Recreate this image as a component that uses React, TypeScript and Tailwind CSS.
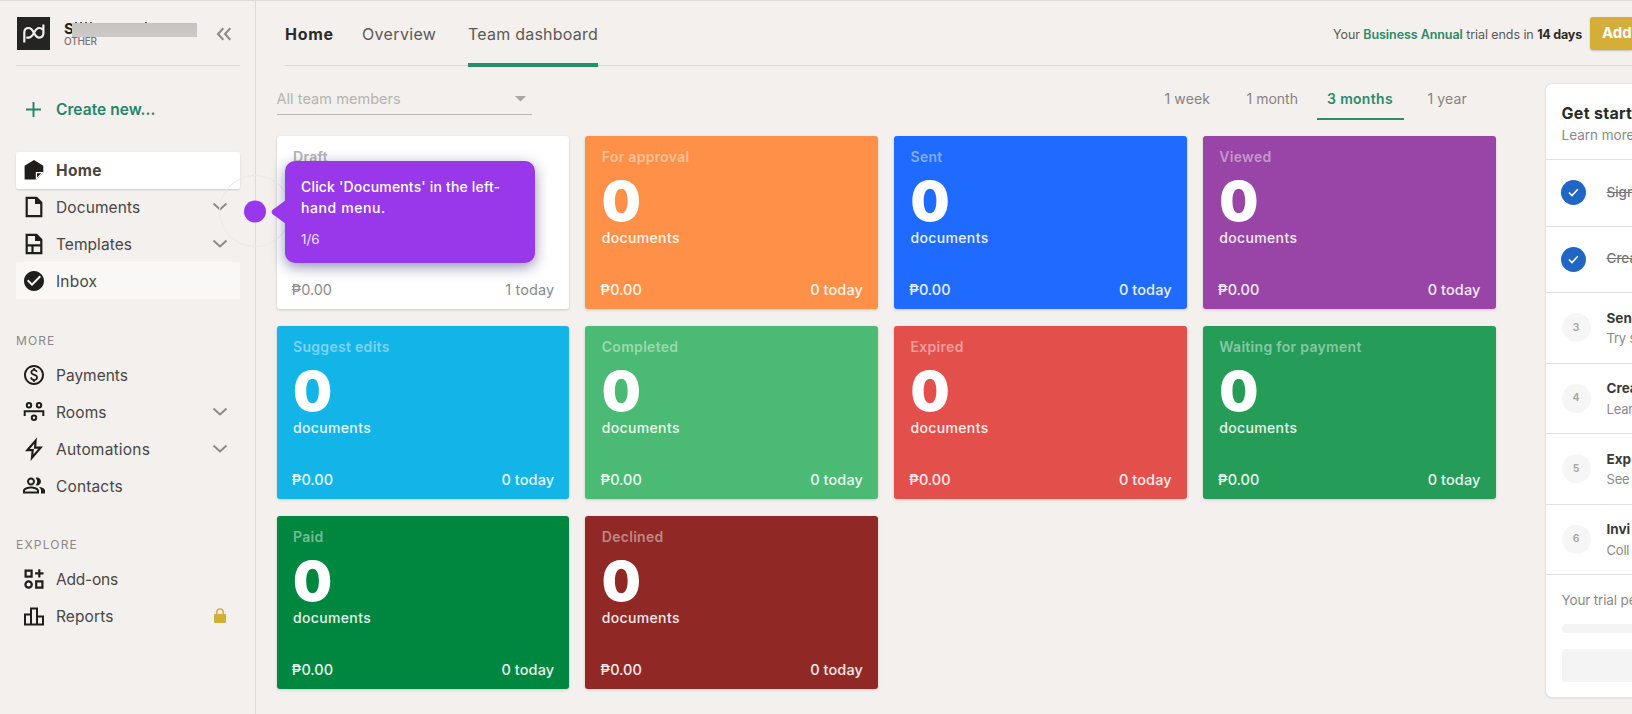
import type { ReactNode } from "react";
import { MdCheckCircle, MdOutlinePaid, MdOutlinePeopleAlt } from "react-icons/md";

const stroke = { fill: "none", stroke: "currentColor", strokeWidth: 2 };

const HomeIcon = () => (
  <svg width="24" height="24" viewBox="0 0 24 24">
    <path d="M12 2 21.300 7.800v6.700L14.500 21.600H2.600V7.800z" fill="currentColor" />
    <path d="M14.400 20.800v-6.200h6.200z" fill="currentColor" stroke="#fff" strokeWidth="1.200" />
  </svg>
);
const DocIcon = () => (
  <svg width="24" height="24" viewBox="0 0 24 24">
    <path d="M4.700 2.900h9.800l4.800 4.800v13.500H4.700z" {...stroke} strokeWidth="2.200" />
    <path d="M13 2.400v6.500h6.800z" fill="currentColor" />
  </svg>
);
const TemplateIcon = () => (
  <svg width="24" height="24" viewBox="0 0 24 24">
    <path d="M4.700 2.900h9.800l4.800 4.800v13.500H4.700zM4.700 13.300h14.600M10.500 13.300v8" {...stroke} strokeWidth="2.200" />
    <path d="M13 2.400v6.500h6.800z" fill="currentColor" />
  </svg>
);
const RoomsIcon = () => (
  <svg width="24" height="24" viewBox="0 0 24 24">
    <g {...stroke} strokeWidth="2">
      <circle cx="7" cy="5.200" r="2.200" />
      <circle cx="17" cy="5.200" r="2.200" />
      <circle cx="12" cy="17.800" r="2.200" />
      <path d="M2.700 16v-4.800h18.600V16" />
    </g>
  </svg>
);
const BoltIcon = () => (
  <svg width="24" height="24" viewBox="0 0 24 24">
    <path d="M13.600 3.600 5.300 13.200h5.400l-.7 7.400 8.600-10h-5.500z" {...stroke} strokeWidth="2.200" />
  </svg>
);
const AddonsIcon = () => (
  <svg width="24" height="24" viewBox="0 0 24 24">
    <g {...stroke} strokeWidth="2.200">
      <path d="M3.600 3.600h6v6h-6zM14.200 14.400h6.200v6.200h-6.200zM17.300 2.200v8.400M13.100 6.400h8.400" />
      <circle cx="6.600" cy="17.500" r="3.200" />
    </g>
  </svg>
);
const ReportsIcon = () => (
  <svg width="25" height="25" viewBox="0 0 24 24">
    <path d="M16 11V3H8v6H2v12h20V11zm-6-6h4v14h-4zm-6 6h4v8H4zm16 8h-4v-6h4z" fill="currentColor" />
  </svg>
);
const LockIcon = () => (
  <svg width="14" height="16" viewBox="0 0 14 16" className="mr-px text-[#d4af37]">
    <path d="M3.800 7V4.300a3.200 3.200 0 0 1 6.400 0V7" fill="none" stroke="currentColor" strokeWidth="1.500" />
    <rect x="1" y="6" width="12" height="9" rx="1.200" fill="currentColor" />
  </svg>
);
const Chevron = () => (
  <svg width="16" height="10" viewBox="0 0 16 10" className="text-[#8b8987]">
    <path d="m1.500 1.500 6.500 6 6.500-6" fill="none" stroke="currentColor" strokeWidth="2" />
  </svg>
);

type NavItem = {
  label: string;
  icon: ReactNode;
  tracking: string;
  expand?: boolean;
  locked?: boolean;
  look?: string;
};

const main: NavItem[] = [
  {
    label: "Home",
    icon: <HomeIcon />,
    tracking: "tracking-[0.3px]",
    look: "bg-white font-bold text-[#222] shadow-[0_1px_2px_rgba(0,0,0,0.15)]",
  },
  { label: "Documents", icon: <DocIcon />, tracking: "tracking-[0.1px]", expand: true },
  { label: "Templates", icon: <TemplateIcon />, tracking: "tracking-[0.05px]", expand: true },
  { label: "Inbox", icon: <MdCheckCircle size={24} />, tracking: "tracking-[0.2px]", look: "bg-[#f9f8f6]" },
];
const more: NavItem[] = [
  { label: "Payments", icon: <MdOutlinePaid size={24} />, tracking: "tracking-[0px]" },
  { label: "Rooms", icon: <RoomsIcon />, tracking: "tracking-[0.1px]", expand: true },
  { label: "Automations", icon: <BoltIcon />, tracking: "tracking-[0.2px]", expand: true },
  { label: "Contacts", icon: <MdOutlinePeopleAlt size={25} />, tracking: "tracking-[0.15px]" },
];
const explore: NavItem[] = [
  { label: "Add-ons", icon: <AddonsIcon />, tracking: "tracking-[-0.2px]" },
  { label: "Reports", icon: <ReportsIcon />, tracking: "tracking-[0.1px]", locked: true },
];

function NavList({ items }: { items: NavItem[] }) {
  return (
    <ul>
      {items.map((it) => (
        <li
          key={it.label}
          className={`flex h-[36.75px] items-center rounded-[2px] pl-1.5 pr-3 text-[15.5px] text-[#484644] ${it.look ?? ""}`}
        >
          <span className="flex w-6 justify-center text-[#1f1e1c]">{it.icon}</span>
          <span className={`ml-[10px] flex-1 pt-px ${it.tracking}`}>{it.label}</span>
          {it.expand && <Chevron />}
          {it.locked && <LockIcon />}
        </li>
      ))}
    </ul>
  );
}

function Sidebar() {
  return (
    <aside className="flex w-[256px] shrink-0 flex-col border-r border-[#dedbd8] pl-4 pr-[15px]">
      <div className="flex h-[65px] shrink-0 items-start border-b border-[#dad7d4] pl-px pt-4">
        <svg width="33" height="33" viewBox="0 0 33 33" className="shrink-0">
          <rect width="33" height="33" fill="#242423" />
          <path
            d="M7.300 25.500V15.500c0-2.800 1.700-4.500 4.300-4.500 5.400 0 5.400 9.600 10.500 9.600 2.700 0 4.300-1.700 4.300-4.500V7.500M9.300 20.600h2.300c5.400 0 5.400-9.600 10.500-9.600 1.600 0 2.900.6 3.600 1.700"
            fill="none"
            stroke="#f3f0ed"
            strokeWidth="2.200"
          />
        </svg>
        <div className="relative ml-3.5 h-9 w-[134px] pt-[3px]">
          <div className="text-[15px] font-bold leading-[17px] text-[#222]">S</div>
          <div className="mt-[-2px] text-[10px] font-medium leading-[13px] tracking-[-0.2px] text-[#777573]">OTHER</div>
          <div className="absolute left-2 top-[6px] h-[14px] w-[125px] bg-gradient-to-b from-[#c6c4c2] to-[#cdcbc9]" />
          <div className="absolute left-[11px] top-[5px] flex gap-[3px]">
            <i className="h-px w-[2px] bg-[#555]" />
            <i className="h-px w-[2px] bg-[#555]" />
            <i className="h-px w-[2px] bg-[#555]" />
            <i className="h-px w-[2px] bg-[#555]" />
            <i className="ml-[50px] h-px w-[2px] bg-[#555]" />
          </div>
        </div>
        <svg width="16" height="14" viewBox="0 0 16 14" className="ml-[18px] mt-2.5">
          <path d="M7.300 1.300 2 7l5.300 5.700M14.300 1.300 9 7l5.300 5.700" fill="none" stroke="#8b8987" strokeWidth="2" />
        </svg>
      </div>
      <div className="mt-[24px] flex h-[38px] shrink-0 items-center pl-2.5 text-[#248567]">
        <svg width="15" height="15" viewBox="0 0 15 15">
          <path d="M7.500 0v15M0 7.500h15" stroke="currentColor" strokeWidth="1.900" />
        </svg>
        <span className="ml-[15px] pt-px text-[15.5px] font-semibold tracking-[0.05px]">Create new...</span>
      </div>
      <div className="mt-[24px]">
        <NavList items={main} />
      </div>
      <h3 className="mt-[33px] text-[12px] leading-[18px] tracking-[1.1px] text-[#8b8987]">MORE</h3>
      <div className="mt-[7px]">
        <NavList items={more} />
      </div>
      <h3 className="mt-[32px] text-[12px] leading-[18px] tracking-[1.2px] text-[#8b8987]">EXPLORE</h3>
      <div className="mt-[7px]">
        <NavList items={explore} />
      </div>
    </aside>
  );
}

function Header() {
  return (
    <header className="ml-[29px] flex h-[65px] shrink-0 items-start border-b border-[#dad7d4]">
      <span className="w-[77px] pt-[21px] text-[16px] font-bold leading-6 tracking-[0.7px] text-[#2b2a29]">Home</span>
      <span className="w-[106px] pt-[21px] text-[16px] leading-6 tracking-[0.35px] text-[#5b5957]">Overview</span>
      <span className="h-[66px] w-[130px] whitespace-nowrap border-b-4 border-[#248f68] pt-[21px] text-[16px] leading-6 tracking-[0.22px] text-[#5b5957]">
        Team dashboard
      </span>
      <div className="ml-auto flex shrink-0 whitespace-nowrap pt-4">
        <p className="pt-[7px] text-[12.5px] leading-[21px] tracking-[-0.07px] text-[#5b5957]">
          Your <b className="font-semibold text-[#2c8a69]">Business Annual</b> trial ends in{" "}
          <b className="font-bold tracking-[-0.2px] text-[#2b2a29]">14 days</b>
        </p>
        <button className="ml-2 h-[33px] w-[42px] rounded-l-[3px] bg-[#d4ae37] pl-3 text-left text-[15px] font-bold text-white shadow-[0_1px_2px_rgba(0,0,0,0.2)]">
          Add
        </button>
      </div>
    </header>
  );
}

const cards = [
  { title: "Draft", bg: "bg-white", today: 1 },
  { title: "For approval", bg: "bg-[#ff9047]", today: 0 },
  { title: "Sent", bg: "bg-[#206bff]", today: 0 },
  { title: "Viewed", bg: "bg-[#9944a7]", today: 0 },
  { title: "Suggest edits", bg: "bg-[#13b4e8]", today: 0 },
  { title: "Completed", bg: "bg-[#4aba74]", today: 0 },
  { title: "Expired", bg: "bg-[#e34f4b]", today: 0 },
  { title: "Waiting for payment", bg: "bg-[#259d58]", today: 0 },
  { title: "Paid", bg: "bg-[#00873f]", today: 0 },
  { title: "Declined", bg: "bg-[#902926]", today: 0 },
];

function Card({ title, bg, today }: (typeof cards)[number]) {
  const draft = title === "Draft";
  return (
    <div
      className={`flex h-[173px] flex-col rounded-[3px] pl-[16.5px] pr-4 shadow-[0_1px_3px_rgba(0,0,0,0.16)] ${bg} ${draft ? "text-[#8b8987]" : "text-white"}`}
    >
      <div className={`mt-[11px] text-[14px] font-semibold leading-5 tracking-[0.3px] ${draft ? "text-[#b5b3b1]" : "text-white/45"}`}>
        {title}
      </div>
      {!draft && (
        <>
          <div className="mt-[6px] text-[55px] font-black leading-[56px]">0</div>
          <div className="text-[14px] font-medium leading-[18px] tracking-[0.35px] text-white/90">documents</div>
        </>
      )}
      <div
        className={`-ml-[1.5px] -mr-px mb-[9px] mt-auto flex justify-between text-[14.5px] leading-5 ${draft ? "" : "font-medium text-white/90"}`}
      >
        <span>₱0.00</span>
        <span className="tracking-[0.1px]">{today} today</span>
      </div>
    </div>
  );
}

function Tour() {
  return (
    <div className="absolute left-[219px] top-[174px] flex size-[72px] items-center justify-center rounded-full border border-[#ece9e6]">
      <div className="size-[22px] translate-y-[0.5px] rounded-full bg-[#9838ea]" />
      <div className="absolute left-[65px] top-[-15px] h-[102px] w-[250px] rounded-[10px] bg-[#9838ea] px-4 pt-[15px] text-white shadow-[0_4px_14px_rgba(40,40,110,0.5)]">
        <svg width="15" height="24" viewBox="0 0 15 24" className="absolute left-[-14px] top-[39px]">
          <path d="M15 0v24L2 14.500Q-.8 12 2 9.500z" fill="#9838ea" />
        </svg>
        <p className="whitespace-nowrap text-[14px] font-medium leading-[21px] tracking-[0.17px]">
          Click 'Documents' in the left-
          <br />
          <span className="tracking-[0.6px]">hand menu.</span>
        </p>
        <p className="mt-[11px] text-[13.5px] leading-[21px] text-white/85">1/6</p>
      </div>
    </div>
  );
}

const steps = [
  { n: 3, title: "Sen", sub: "Try s" },
  { n: 4, title: "Crea", sub: "Lear" },
  { n: 5, title: "Exp", sub: "See" },
  { n: 6, title: "Invi", sub: "Coll" },
];

function Checklist() {
  return (
    <section className="ml-[49px] mt-[17px] h-[615px] w-[88px] shrink-0 overflow-hidden whitespace-nowrap rounded-l-[7px] border border-r-0 border-[#e6e3e0] bg-white shadow-[0_1px_2px_rgba(0,0,0,0.06)]">
      <div className="h-[76px] border-b border-[#dfdfdf] pl-4 pt-[18px]">
        <h2 className="text-[16px] font-bold leading-[22px] tracking-[0.3px] text-[#2b2a29]">Get start</h2>
        <p className="text-[13.5px] leading-[23px] text-[#8b8987]">Learn more</p>
      </div>
      {["Sign", "Crea"].map((t) => (
        <div key={t} className="flex h-[66.5px] items-center border-b border-[#dfdfdf] pl-[15px]">
          <span className="flex size-[25px] shrink-0 items-center justify-center rounded-full bg-[#1f66c7]">
            <svg width="11" height="9" viewBox="0 0 11 9">
              <path d="m1 4.500 3 3L9.800 1.200" fill="none" stroke="#fff" strokeWidth="1.600" />
            </svg>
          </span>
          <s className="ml-[21px] pb-0.5 text-[13.5px] font-medium text-[#777573]">{t}</s>
        </div>
      ))}
      {steps.map((s) => (
        <div key={s.n} className="flex h-[70.5px] items-center border-b border-[#dfdfdf] pl-4">
          <span className="flex size-[29px] shrink-0 items-center justify-center rounded-full bg-[#f6f6f6] text-[10.5px] font-semibold text-[#a5a3a1]">
            {s.n}
          </span>
          <div className="ml-4 pt-px leading-[20.5px]">
            <div className="text-[13.5px] font-bold text-[#3a3938]">{s.title}</div>
            <div className="text-[13px] tracking-[-0.2px] text-[#8b8987]">{s.sub}</div>
          </div>
        </div>
      ))}
      <div className="pl-4 pt-[15px]">
        <p className="text-[13.5px] leading-5 tracking-[-0.15px] text-[#8b8987]">Your trial pe</p>
        <div className="mt-3.5 h-[9px] rounded-l-[4px] bg-[#f4f4f4]" />
        <div className="mt-4 h-[33px] rounded-l-[3px] bg-[#f4f4f4]" />
      </div>
    </section>
  );
}

function Filters() {
  return (
    <div className="flex h-[70px] justify-between text-[14.5px]">
      <div className="mt-[18px] flex h-[31px] w-[255px] items-center justify-between border-b border-[#b9b7b5] pr-1.5 text-[#b5b3b1]">
        <span className="tracking-[0.05px]">All team members</span>
        <svg width="11" height="6" viewBox="0 0 11 6">
          <path d="M0 0h11L5.500 5.500z" fill="#aaa8a6" />
        </svg>
      </div>
      <div className="mr-[17px] mt-[13px] flex h-[41px] text-[14px] leading-[40px] text-[#858381]">
        <span className="w-[82px] tracking-[0.1px]">1 week</span>
        <span className="w-[70px]">1 month</span>
        <span className="mr-[12px] w-[87px] border-b-2 border-[#2f8d6c] text-center font-semibold tracking-[0.3px] text-[#2c8a69]">
          3 months
        </span>
        <span className="w-[63px] pl-[12px] tracking-[0.1px]">1 year</span>
      </div>
    </div>
  );
}

export default function App() {
  return (
    <div className="relative flex h-[714px] w-[1632px] overflow-hidden border-t border-[#dedbd8] bg-[#f3f0ed] font-['Inter',sans-serif]">
      <Sidebar />
      <div className="flex min-w-0 flex-1 flex-col">
        <Header />
        <div className="flex">
          <main className="ml-[20.5px] w-[1219px] shrink-0">
            <Filters />
            <div className="grid grid-cols-4 gap-x-4 gap-y-[17px]">
              {cards.map((c) => (
                <Card key={c.title} {...c} />
              ))}
            </div>
          </main>
          <Checklist />
        </div>
      </div>
      <Tour />
    </div>
  );
}
